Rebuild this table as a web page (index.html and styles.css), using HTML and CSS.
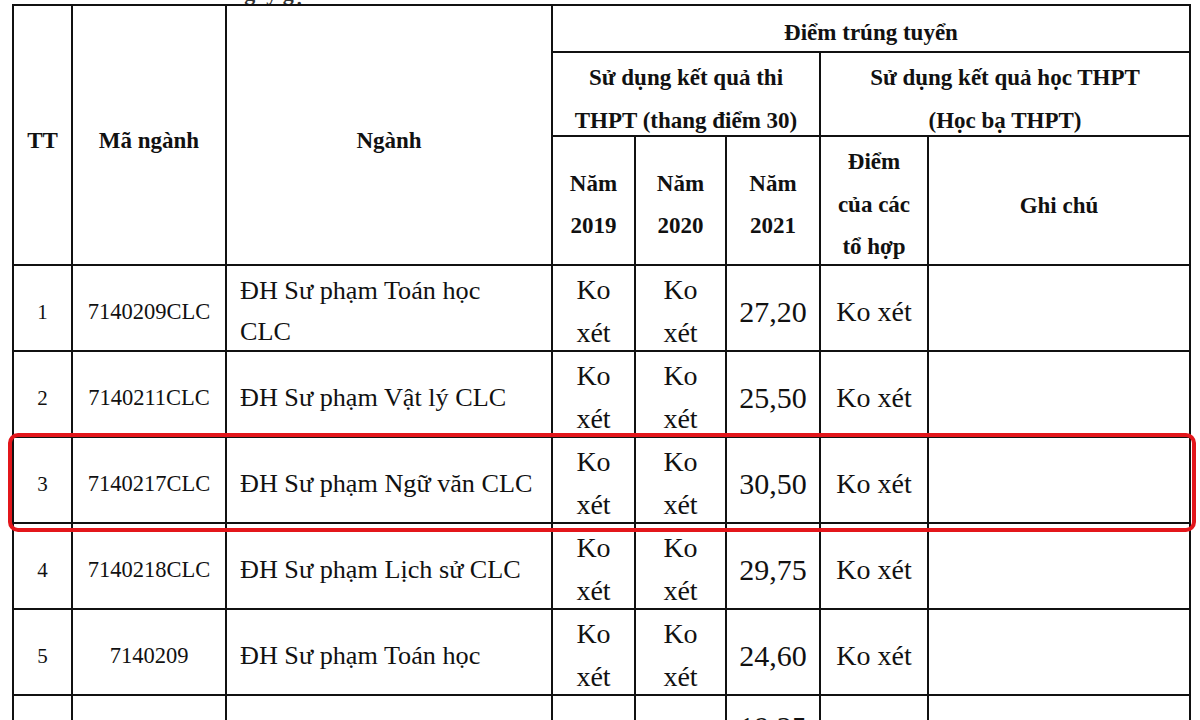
FILE: index.html
```html
<!DOCTYPE html>
<html lang="vi">
<head>
<meta charset="utf-8">
<title>Điểm trúng tuyển</title>
<link rel="stylesheet" href="styles.css">
</head>
<body>
<div class="page">
  <div class="caption"><div class="caption-text">ngày gọi</div></div>
  <table class="scores">
    <colgroup>
      <col class="c-tt"><col class="c-code"><col class="c-name"><col class="c-y19"><col class="c-y20"><col class="c-y21"><col class="c-hb"><col class="c-note">
    </colgroup>
    <thead>
      <tr class="h1">
        <th rowspan="3" class="tall">TT</th>
        <th rowspan="3" class="tall">Mã ngành</th>
        <th rowspan="3" class="tall">Ngành</th>
        <th colspan="5">Điểm trúng tuyển</th>
      </tr>
      <tr class="h2">
        <th colspan="3"><span class="stack2h">Sử dụng kết quả thi<br>THPT (thang điểm 30)</span></th>
        <th colspan="2"><span class="stack2h">Sử dụng kết quả học THPT<br>(Học bạ THPT)</span></th>
      </tr>
      <tr class="h3">
        <th class="one">Năm<br>2019</th>
        <th class="one">Năm<br>2020</th>
        <th class="one">Năm<br>2021</th>
        <th><span class="stack3">Điểm<br>của các<br>tổ hợp</span></th>
        <th class="one note">Ghi chú</th>
      </tr>
    </thead>
    <tbody>
      <tr class="row">
        <td class="tt one">1</td><td class="code one">7140209CLC</td><td class="name"><span class="stack2">ĐH Sư phạm Toán học<br>CLC</span></td>
        <td class="ko"><span class="stack2">Ko<br>xét</span></td><td class="ko"><span class="stack2">Ko<br>xét</span></td><td class="num one">27,20</td><td class="ko one">Ko xét</td><td></td>
      </tr>
      <tr class="row">
        <td class="tt one">2</td><td class="code one">7140211CLC</td><td class="name one">ĐH Sư phạm Vật lý CLC</td>
        <td class="ko"><span class="stack2">Ko<br>xét</span></td><td class="ko"><span class="stack2">Ko<br>xét</span></td><td class="num one">25,50</td><td class="ko one">Ko xét</td><td></td>
      </tr>
      <tr class="row">
        <td class="tt one">3</td><td class="code one">7140217CLC</td><td class="name one">ĐH Sư phạm Ngữ văn CLC</td>
        <td class="ko"><span class="stack2">Ko<br>xét</span></td><td class="ko"><span class="stack2">Ko<br>xét</span></td><td class="num one">30,50</td><td class="ko one">Ko xét</td><td></td>
      </tr>
      <tr class="row">
        <td class="tt one">4</td><td class="code one">7140218CLC</td><td class="name one">ĐH Sư phạm Lịch sử CLC</td>
        <td class="ko"><span class="stack2">Ko<br>xét</span></td><td class="ko"><span class="stack2">Ko<br>xét</span></td><td class="num one">29,75</td><td class="ko one">Ko xét</td><td></td>
      </tr>
      <tr class="row">
        <td class="tt one">5</td><td class="code one">7140209</td><td class="name one">ĐH Sư phạm Toán học</td>
        <td class="ko"><span class="stack2">Ko<br>xét</span></td><td class="ko"><span class="stack2">Ko<br>xét</span></td><td class="num one">24,60</td><td class="ko one">Ko xét</td><td></td>
      </tr>
      <tr class="row last">
        <td></td><td></td><td></td><td></td><td></td><td class="num">19,25</td><td></td><td></td>
      </tr>
    </tbody>
  </table>
  <div class="highlight"></div>
</div>
</body>
</html>
```
FILE: styles.css
```css
html, body {
  margin: 0;
  padding: 0;
  background: #ffffff;
}
body {
  width: 1200px;
  height: 720px;
  overflow: hidden;
  font-family: "Liberation Serif", "Times New Roman", serif;
  color: #111111;
}
.page {
  position: relative;
  width: 1200px;
  height: 720px;
  overflow: hidden;
}
.caption {
  height: 4px;
  overflow: hidden;
}
.caption-text {
  margin-top: -18px;
  padding-left: 232px;
  font-size: 22px;
  line-height: 22px;
  font-weight: bold;
  color: #333;
}
.scores {
  margin-left: 12px;
  width: 1179px;
  table-layout: fixed;
  border-collapse: collapse;
}
.c-tt { width: 59px; }
.c-code { width: 154px; }
.c-name { width: 326px; }
.c-y19 { width: 83px; }
.c-y20 { width: 91px; }
.c-y21 { width: 94px; }
.c-hb { width: 108px; }
.c-note { width: 262px; }

.scores th,
.scores td {
  border: 2px solid #111111;
  padding: 0;
  text-align: center;
  vertical-align: middle;
}
.scores th {
  font-size: 23px;
  line-height: 42px;
  font-weight: bold;
}
.h1 { height: 47px; }
.h1 th {
  line-height: 36px;
  vertical-align: bottom;
  padding-bottom: 0;
}
.h1 th.tall {
  vertical-align: middle;
  line-height: 42px;
  padding-top: 12px;
}
.h2 { height: 84px; }
.h3 { height: 129px; }
.row { height: 86px; }

/* single-block cells: push text slightly lower, as in the scanned table */
.scores .one { padding-top: 8px; }
.scores .note { padding-top: 10px; }

.stack2h {
  display: block;
  line-height: 43px;
  margin-top: 3px;
  margin-bottom: -7px;
}
.stack3 {
  display: block;
  line-height: 42.5px;
  margin-top: 4px;
  margin-bottom: -5px;
}
.stack2 {
  display: block;
  line-height: 42.5px;
  margin-top: 3px;
  margin-bottom: -4px;
}

.tt { font-size: 21px; }
.code { font-size: 22.5px; }
.name {
  text-align: left !important;
  padding-left: 13px !important;
  font-size: 26.2px;
  line-height: 40px;
}
.name .stack2 { line-height: 41px; margin-bottom: -2px; }
.ko {
  font-size: 28px;
  line-height: 42px;
}
.num {
  font-size: 30px;
  line-height: 42px;
}
.scores .last td {
  vertical-align: top;
  padding-top: 10px;
}
.highlight {
  position: absolute;
  left: 8px;
  top: 433px;
  width: 1180px;
  height: 91px;
  border: 4px solid #e3161b;
  border-radius: 10px;
}
```
